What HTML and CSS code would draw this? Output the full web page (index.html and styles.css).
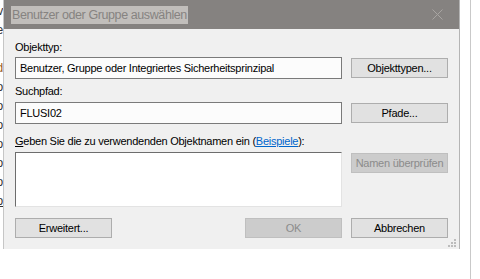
FILE: index.html
```html
<!DOCTYPE html>
<html lang="de">
<head>
    <meta charset="UTF-8">
    <meta name="viewport" content="width=device-width, initial-scale=1.0">
    <title>Benutzer oder Gruppe auswählen</title>
    <link rel="stylesheet" href="styles.css">
</head>
<body>

    <div class="desktop">
        <div class="behind">
            <span>v</span>
            <span>e</span>
            <span>&nbsp;</span>
            <span class="mark">d</span>
            <span>o</span>
            <span>o</span>
            <span>o</span>
            <span>o</span>
            <span>o</span>
            <span>o</span>
            <span class="ul">o</span>
        </div>

        <div class="dialog">
            <div class="titlebar">
                <span class="title">Benutzer oder Gruppe auswählen</span>
                <svg class="close" width="11" height="11" viewBox="0 0 11 11">
                    <path d="M0.5 0.5 L10.5 10.5 M10.5 0.5 L0.5 10.5" stroke="#a8a5a2" stroke-width="1" fill="none"/>
                </svg>
            </div>

            <div class="content">
                <div class="label first">Objekttyp:</div>
                <div class="row">
                    <div class="field">Benutzer, Gruppe oder Integriertes Sicherheitsprinzipal</div>
                    <button class="btn">Objekttypen...</button>
                </div>

                <div class="label">Suchpfad:</div>
                <div class="row">
                    <div class="field">FLUSI02</div>
                    <button class="btn">Pfade...</button>
                </div>

                <div class="label names"><u>G</u>eben Sie die zu verwendenden Objektnamen ein (<a href="#">Beispiele</a>):</div>
                <div class="row top">
                    <div class="names-box"></div>
                    <button class="btn disabled">Namen überprüfen</button>
                </div>

                <div class="actions">
                    <button class="btn">Erweitert...</button>
                    <div class="spacer"></div>
                    <button class="btn disabled">OK</button>
                    <button class="btn">Abbrechen</button>
                </div>

                <div class="grip">
                    <i></i><i></i><i></i><i></i><i></i><i></i>
                </div>
            </div>
        </div>

        <div class="side"></div>
    </div>

</body>
</html>
```

FILE: styles.css
```css
body {
    margin: 0;
    background-color: #ffffff;
    font-family: "Liberation Sans", Arial, sans-serif;
    font-size: 11px;
    letter-spacing: -0.25px;
    color: #000000;
}
.desktop {
    display: flex;
    height: 279px;
    width: 480px;
    overflow: hidden;
}
.behind {
    width: 3px;
    overflow: hidden;
    display: flex;
    flex-direction: column;
    align-items: flex-end;
    padding-top: 2px;
    line-height: 19px;
    font-size: 12px;
    color: #333;
}
.behind span {
    display: block;
    width: 3px;
    direction: rtl;
    white-space: nowrap;
}
.behind .mark {
    color: #9a5a20;
}
.behind .ul {
    text-decoration: underline;
}
.dialog {
    width: 455px;
    height: 249px;
    border-left: 1px solid #c6c6c6;
    border-right: 1px solid #b4b4b4;
    display: flex;
    flex-direction: column;
}
.titlebar {
    height: 29px;
    background-color: #858280;
    display: flex;
    align-items: center;
    padding-left: 7px;
    padding-right: 16px;
}
.title {
    background-color: #c1bebb;
    color: #868381;
    font-size: 12.5px;
    letter-spacing: -0.4px;
    line-height: 18px;
    padding: 0 1px;
}
.close {
    margin-left: auto;
}
.content {
    flex: 1;
    background-color: #f0f0f0;
    padding: 11px 11px 0 11px;
    display: flex;
    flex-direction: column;
    position: relative;
}
.label {
    line-height: 15px;
    height: 15px;
    margin-top: 5px;
    margin-bottom: 3px;
    white-space: nowrap;
}
.label.first {
    margin-top: 0;
    margin-bottom: 2px;
}
.label.names {
    margin-top: 10px;
}
.label a {
    color: #0066cc;
}
.row {
    display: flex;
    align-items: center;
    gap: 9px;
}
.row.top {
    align-items: flex-start;
}
.field {
    width: 313px;
    height: 20px;
    line-height: 20px;
    border: 1px solid #7a7a7a;
    background-color: #fcfcfc;
    padding-left: 4px;
    padding-right: 8px;
    white-space: nowrap;
    overflow: hidden;
}
.names-box {
    width: 325px;
    height: 53px;
    background-color: #ffffff;
    border: 1px solid #e3e3e3;
    border-top-color: #6d6d6d;
    border-left-color: #6d6d6d;
}
.btn {
    width: 97px;
    height: 20px;
    padding: 0;
    font-family: inherit;
    font-size: 11px;
    letter-spacing: -0.25px;
    white-space: nowrap;
    color: #000000;
    background-color: #e1e1e1;
    border: 1px solid #adadad;
}
.row.top .btn {
    margin-top: 1px;
}
.btn.disabled {
    background-color: #cccccc;
    border-color: #bfbfbf;
    color: #8b8b8b;
}
.actions {
    display: flex;
    gap: 9px;
    margin-top: 11px;
}
.spacer {
    flex: 1;
}
.grip {
    position: absolute;
    right: 3px;
    bottom: 2px;
    width: 8px;
    height: 8px;
}
.grip i {
    position: absolute;
    width: 2px;
    height: 2px;
    background-color: #bcbcbc;
}
.grip i:nth-child(1) { right: 0; bottom: 0; }
.grip i:nth-child(2) { right: 3px; bottom: 0; }
.grip i:nth-child(3) { right: 6px; bottom: 0; }
.grip i:nth-child(4) { right: 0; bottom: 3px; }
.grip i:nth-child(5) { right: 3px; bottom: 3px; }
.grip i:nth-child(6) { right: 0; bottom: 6px; }
.side {
    width: 1px;
    margin-left: 10px;
    background-color: #c9c9c9;
}
```
